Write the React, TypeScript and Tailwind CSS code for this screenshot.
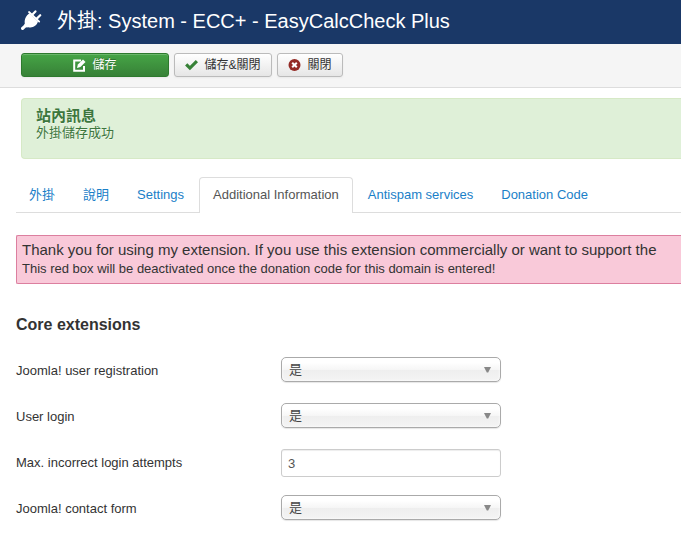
import { useState } from 'react'
import type { ReactNode } from 'react'

const tabs = ['外掛', '說明', 'Settings', 'Additional Information', 'Antispam services', 'Donation Code']

function PlugIcon() {
  return (
    <svg className="size-[21px] shrink-0" viewBox="0 0 21 21" fill="none" stroke="currentColor" strokeLinecap="round">
      <path d="M1.6 18.4 4.6 15.6" strokeWidth="3.2" />
      <path d="m11.2 4.8 3.2-3.4M15.8 8.6l3.4-3.4" strokeWidth="2.2" />
      <path d="m8 2 10.2 9.6" strokeWidth="1.8" />
      <path
        d="M8.4 3.2 17 11.6C15.8 15.8 11.4 18.4 7.4 17.2L5.6 17.6 3 15.2 3.8 13.4C3.2 9.4 5 5.4 8.4 3.2Z"
        fill="currentColor"
        stroke="none"
      />
    </svg>
  )
}

function EditIcon() {
  return (
    <svg className="size-[13px]" viewBox="0 0 13 13" fill="none" stroke="currentColor">
      <path d="M8 1.6H1.2v10.2H11V7" strokeWidth="2" />
      <path d="m4 9 .9-3.4L10 .5l2.5 2.5-5.1 5.1Z" fill="currentColor" stroke="none" />
    </svg>
  )
}

function CheckIcon() {
  return (
    <svg className="size-[13px]" viewBox="0 0 13 13" fill="none" stroke="#378137" strokeWidth="3.2">
      <path d="m1.2 5.4 3.7 3.7 7-7" />
    </svg>
  )
}

function CancelIcon() {
  return (
    <svg className="size-[13px]" viewBox="0 0 13 13">
      <circle cx="6.5" cy="6" r="6" fill="#942a25" />
      <path d="m4.2 3.7 4.6 4.6m0-4.6L4.2 8.3" stroke="#fff" strokeWidth="2" />
    </svg>
  )
}

function ToolbarButton({ icon, children, className }: { icon: ReactNode; children: ReactNode; className: string }) {
  return (
    <button
      type="button"
      className={`flex h-6 items-center justify-center gap-1.5 rounded-[3px] border text-xs leading-4 shadow-[inset_0_1px_0_rgba(255,255,255,.2),0_1px_2px_rgba(0,0,0,.05)] ${className}`}
    >
      {icon}
      {children}
    </button>
  )
}

function Row({ id, label, children }: { id: string; label: string; children: ReactNode }) {
  return (
    <div className="flex h-7 items-start">
      <label htmlFor={id} className="w-[265px] shrink-0 leading-7">{label}</label>
      {children}
    </div>
  )
}

function YesNo({ id }: { id: string }) {
  return (
    <div className="relative w-[220px]">
      <select
        id={id}
        defaultValue="1"
        className="block h-[25px] w-full appearance-none rounded-[5px] border border-[#aaa] bg-[linear-gradient(#fff_20%,#f6f6f6_50%,#eee_52%,#f4f4f4_100%)] px-[7px] text-[13px] text-[#444] shadow-[inset_0_0_3px_#fff,0_1px_1px_rgba(0,0,0,.1)]"
      >
        <option value="1">是</option>
        <option value="0">否</option>
      </select>
      <svg className="pointer-events-none absolute top-2.5 right-2.5 h-1.5 w-[7px]" viewBox="0 0 7 6">
        <path d="M0 0h7L4.2 5.5H2.8Z" fill="#888" />
      </svg>
    </div>
  )
}

export default function App() {
  const [active, setActive] = useState('Additional Information')

  return (
    <div className="min-h-screen overflow-hidden bg-white font-['Liberation_Sans','Noto_Sans_CJK_TC',sans-serif] text-[13px] leading-[18px] text-[#333]">
      <header className="flex h-11 items-center gap-[15px] bg-[#1a3867] px-[21px] pb-1 text-white">
        <PlugIcon />
        <h1 className="truncate pt-0.5 text-xl leading-8">外掛: System - ECC+ - EasyCalcCheck Plus</h1>
      </header>

      {/* Toolbar */}
      <div className="flex h-11 gap-[5px] border-b border-[#ddd] bg-[#f5f5f5] px-[21px] pt-[9px]">
        <ToolbarButton
          icon={<EditIcon />}
          className="w-[148px] border-[#2e7a2e] bg-linear-to-b from-[#46a546] to-[#378137] text-white [text-shadow:0_-1px_0_rgba(0,0,0,.25)]"
        >
          儲存
        </ToolbarButton>
        <ToolbarButton icon={<CheckIcon />} className="w-[98px] border-[#bbb] bg-linear-to-b from-white to-[#e6e6e6]">
          儲存&amp;關閉
        </ToolbarButton>
        <ToolbarButton icon={<CancelIcon />} className="w-[66px] border-[#bbb] bg-linear-to-b from-white to-[#e6e6e6]">
          關閉
        </ToolbarButton>
      </div>

      <main className="pt-2.5 pl-4">
        {/* System message */}
        <div className="ml-[5px] h-[61px] rounded-l border border-r-0 border-[#d6e9c6] bg-[#dff0d8] px-3.5 pt-2 text-[#3c763d] [text-shadow:0_1px_0_rgba(255,255,255,.5)]">
          <h4 className="text-[15px] leading-[18px] font-bold">站內訊息</h4>
          <p className="leading-4">外掛儲存成功</p>
        </div>

        <div role="tablist" className="mt-[18px] flex border-b border-[#ddd]">
          {tabs.map((tab) => (
            <button
              key={tab}
              type="button"
              role="tab"
              aria-selected={tab === active}
              onClick={() => setActive(tab)}
              className={
                tab === active
                  ? '-mb-px mr-0.5 h-9 rounded-t border border-b-0 border-[#ddd] bg-white px-[13px] pb-0.5 whitespace-nowrap text-[#555]'
                  : 'mr-0.5 h-[35px] border border-b-0 border-transparent px-3 whitespace-nowrap text-[#1a80c8]'
              }
            >
              {tab}
            </button>
          ))}
        </div>

        {/* Donation notice */}
        <div className="mt-[22px] h-[49px] overflow-hidden rounded-l-xs border border-r-0 border-[#dc7f9f] bg-[#f9c9d9] pt-1 pl-[5px] whitespace-nowrap">
          <p className="text-[15px] leading-5">
            Thank you for using my extension. If you use this extension commercially or want to support the
          </p>
          <p>This red box will be deactivated once the donation code for this domain is entered!</p>
        </div>

        <h2 className="mt-[31px] text-base leading-5 font-bold">Core extensions</h2>
        <form className="mt-[22px] flex flex-col gap-[18px]">
          <Row id="registration" label="Joomla! user registration">
            <YesNo id="registration" />
          </Row>
          <Row id="login" label="User login">
            <YesNo id="login" />
          </Row>
          <Row id="attempts" label="Max. incorrect login attempts">
            <input
              id="attempts"
              type="text"
              defaultValue="3"
              className="h-7 w-[220px] rounded-[3px] border border-[#ccc] bg-white px-1.5 text-[#555] shadow-[inset_0_1px_1px_rgba(0,0,0,.075)]"
            />
          </Row>
          <Row id="contact" label="Joomla! contact form">
            <YesNo id="contact" />
          </Row>
        </form>
      </main>
    </div>
  )
}
